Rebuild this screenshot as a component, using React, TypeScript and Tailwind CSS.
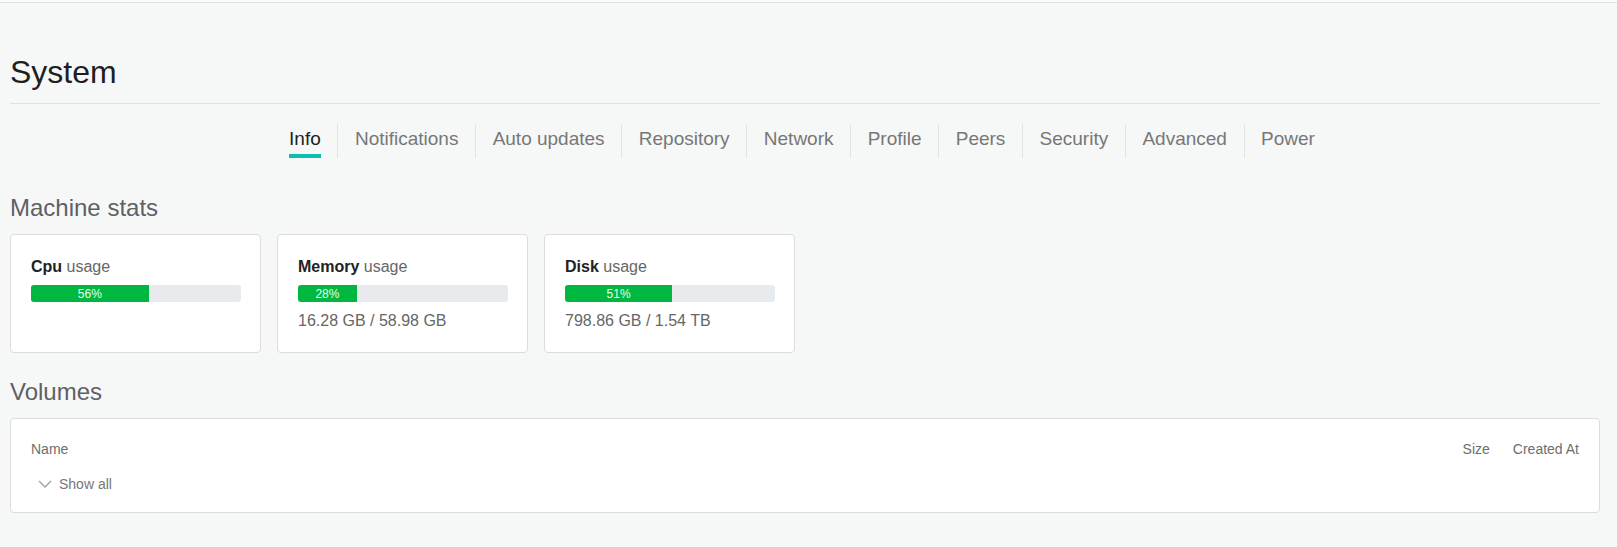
const tabs = [
  "Info",
  "Notifications",
  "Auto updates",
  "Repository",
  "Network",
  "Profile",
  "Peers",
  "Security",
  "Advanced",
  "Power",
];

const stats = [
  { name: "Cpu", percent: 56, detail: "" },
  { name: "Memory", percent: 28, detail: "16.28 GB / 58.98 GB" },
  { name: "Disk", percent: 51, detail: "798.86 GB / 1.54 TB" },
];

const StatCard = ({ name, percent, detail }: { name: string; percent: number; detail: string }) => {
  return (
    <div className="w-[251px] rounded-[4px] border border-[#dcdcdc] bg-white pt-[20px] pr-[20px] pb-[19px] pl-[20px]">
      <p className="text-[16px] leading-[24px] text-[#666]">
        <span className="font-bold text-[#222]">{name}</span> usage
      </p>
      <div className="mt-[6px] flex h-[17px] w-[210px] overflow-hidden rounded-[3px] bg-[#e8ebee]">
        <div
          className="flex h-full items-center justify-center bg-[#00b83f] text-[12px] leading-none text-[#e6fff0]"
          style={{ width: `${percent}%` }}
        >
          {percent}%
        </div>
      </div>
      {detail && (
        <p className="mt-[7px] text-[16px] leading-[24px] text-[#666]">{detail}</p>
      )}
    </div>
  );
};

export default function App() {
  return (
    <div className="min-h-[547px] bg-[#f6f7f7] font-['Liberation_Sans',Arial,sans-serif]">
      {/* top strip */}
      <div className="h-[2px] bg-[#fbfbfb]" />
      <div className="h-px bg-[#e2e2e2]" />

      <div className="pl-[10px] pr-[17px]">
        {/* page header */}
        <div className="mt-[50px] border-b border-[#e0e0e0] pb-[12px]">
          <h1 className="text-[32px] leading-[38px] text-[#1f1f1f]">System</h1>
        </div>

        {/* tabs */}
        <div className="mt-[20px] flex justify-center pr-[6px]">
          {tabs.map((tab, i) => (
            <div
              key={tab}
              className={`flex h-[34px] flex-col items-start px-[16.6px] pt-px ${
                i > 0 ? "border-l border-[#e3e3e3]" : ""
              }`}
            >
              <span
                className={`text-[19px] leading-[27px] ${
                  i === 0 ? "text-[#222]" : "text-[#777]"
                }`}
              >
                {tab}
              </span>
              {i === 0 && <span className="mt-[2px] h-[4px] w-full bg-[#0cbfae]" />}
            </div>
          ))}
        </div>

        {/* machine stats */}
        <h2 className="mt-[35px] text-[24px] leading-[29px] text-[#5f5f66]">Machine stats</h2>
        <div className="mt-[12px] flex gap-4">
          {stats.map((s) => (
            <StatCard key={s.name} {...s} />
          ))}
        </div>

        {/* volumes */}
        <h2 className="mt-[24px] text-[24px] leading-[29px] text-[#5f5f66]">Volumes</h2>
        <div className="mt-[12px] rounded-[4px] border border-[#dcdcdc] bg-white px-[20px] pt-[20px] pb-[18px]">
          <div className="flex text-[14px] leading-[20px] text-[#6e6e6e]">
            <span className="flex-1">Name</span>
            <span>Size</span>
            <span className="ml-[23px]">Created At</span>
          </div>
          <button className="mt-[15px] ml-[7px] flex items-center gap-[7px] text-[14px] leading-[20px] text-[#777]">
            <svg width="14" height="8" viewBox="0 0 14 8" fill="none">
              <path d="M1 1l6 6 6-6" stroke="#aaa" strokeWidth="1.6" />
            </svg>
            Show all
          </button>
        </div>
      </div>
    </div>
  );
}
